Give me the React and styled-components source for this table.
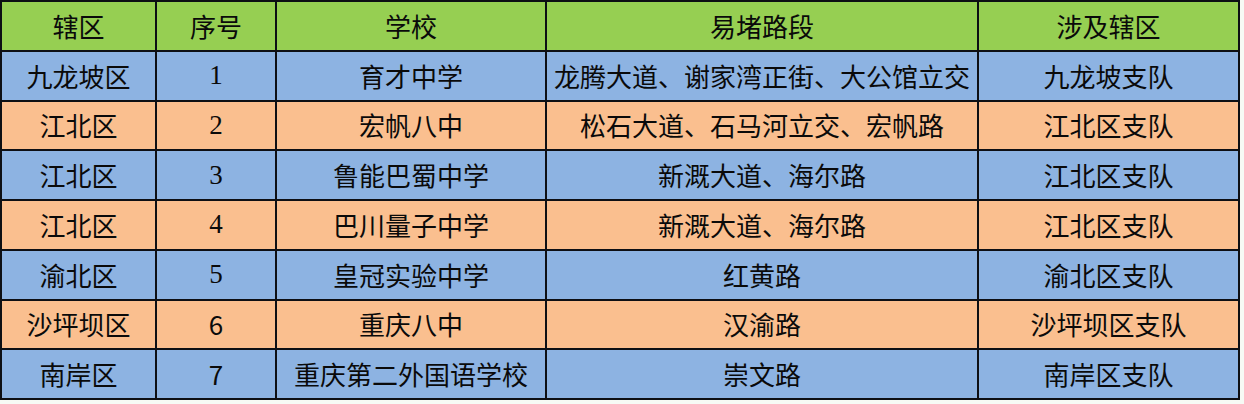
import React from "react";
import styled, { createGlobalStyle } from "styled-components";

const Global = createGlobalStyle`
  html, body { margin: 0; padding: 0; background: #f7faf5; }
  body { font-family: "Noto Sans CJK SC", "Noto Sans", sans-serif; }
`;

const tones = {
  head: "#96cf52",
  blue: "#8db3e2",
  orange: "#fabf8f",
};

const Table = styled.div`
  display: grid;
  grid-template-columns: 153px 118px 268px 430px 259px;
  grid-template-rows: repeat(8, 1fr);
  gap: 2px;
  padding: 2px;
  width: 1240px;
  height: 400px;
  box-sizing: border-box;
  background: #0d0f14;
`;

const Cell = styled.div`
  display: flex;
  align-items: center;
  justify-content: center;
  background: ${(p) => tones[p.$tone]};
  color: #0a0a0a;
  font-size: ${(p) => (p.$serif ? "27px" : "26px")};
  font-family: ${(p) =>
    p.$serif
      ? '"Liberation Serif", "Noto Sans CJK SC", serif'
      : '"Noto Sans CJK SC", "Noto Sans", sans-serif'};
  white-space: nowrap;
  line-height: 1;
`;

const header = ["辖区", "序号", "学校", "易堵路段", "涉及辖区"];

const rows = [
  ["九龙坡区", "1", "育才中学", "龙腾大道、谢家湾正街、大公馆立交", "九龙坡支队", true],
  ["江北区", "2", "宏帆八中", "松石大道、石马河立交、宏帆路", "江北区支队", true],
  ["江北区", "3", "鲁能巴蜀中学", "新溉大道、海尔路", "江北区支队", true],
  ["江北区", "4", "巴川量子中学", "新溉大道、海尔路", "江北区支队", true],
  ["渝北区", "5", "皇冠实验中学", "红黄路", "渝北区支队", true],
  ["沙坪坝区", "6", "重庆八中", "汉渝路", "沙坪坝区支队", false],
  ["南岸区", "7", "重庆第二外国语学校", "崇文路", "南岸区支队", false],
];

export default function App() {
  return (
    <>
      <Global />
      <Table>
        {header.map((h) => (
          <Cell key={h} $tone="head">
            {h}
          </Cell>
        ))}
        {rows.map((r, i) => {
          const tone = i % 2 === 0 ? "blue" : "orange";
          return (
            <React.Fragment key={i}>
              <Cell $tone={tone}>{r[0]}</Cell>
              <Cell $tone={tone} $serif={r[5]}>
                {r[1]}
              </Cell>
              <Cell $tone={tone}>{r[2]}</Cell>
              <Cell $tone={tone}>{r[3]}</Cell>
              <Cell $tone={tone}>{r[4]}</Cell>
            </React.Fragment>
          );
        })}
      </Table>
    </>
  );
}
